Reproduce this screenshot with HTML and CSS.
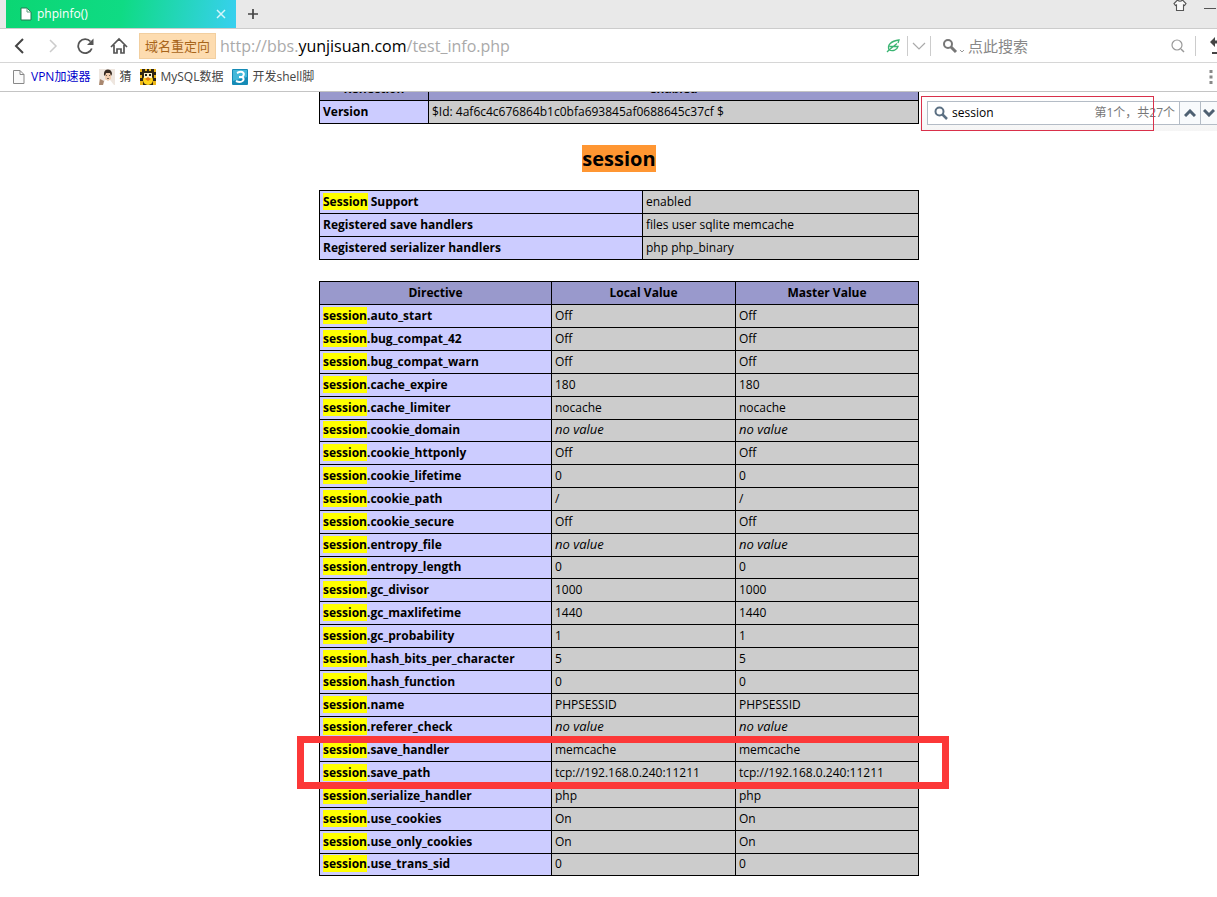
FILE: index.html
```html
<!DOCTYPE html>
<html lang="zh-CN">
<head>
<meta charset="utf-8">
<title>phpinfo()</title>
<link rel="stylesheet" href="styles.css">
</head>
<body>
<header class="browser">
  <div class="tabbar">
    <div class="tab">
      <svg class="tab-icon" width="12" height="14" viewBox="0 0 12 14"><path d="M1 1h6l4 4v8H1z" fill="#fff" stroke="#237a51"/><path d="M7 1v4h4" fill="none" stroke="#5d9c7c"/></svg>
      <span class="tab-title">phpinfo()</span>
      <button class="icon-btn" aria-label="关闭"><svg width="10" height="10" viewBox="0 0 10 10"><path d="M1 1l8 8M9 1l-8 8" stroke="#d5f6fa" stroke-width="1.5"/></svg></button>
    </div>
    <button class="icon-btn" aria-label="新标签"><svg width="12" height="12" viewBox="0 0 12 12"><path d="M6 1v10M1 6h10" stroke="#444" stroke-width="1.7"/></svg></button>
    <div class="window-tools">
      <button class="icon-btn" aria-label="皮肤"><svg width="14" height="13" viewBox="0 0 14 13"><path d="M4.500 0Q7 2.200 9.500 0L13 3.500 11.500 5.500 10.500 5V10.500H3.500V5L2.500 5.500 1 3.500z" fill="#f8f8f8" stroke="#555" stroke-width="1.100"/></svg></button>
      <button class="icon-btn" aria-label="最小化"><svg width="14" height="13" viewBox="0 0 14 13"><path d="M1 8.500h12" stroke="#555"/></svg></button>
    </div>
  </div>
  <div class="navbar">
    <div class="nav-buttons">
      <button class="icon-btn" aria-label="后退"><svg width="18" height="18" viewBox="0 0 18 18"><path d="M12 2L5 9l7 7" fill="none" stroke="#444" stroke-width="2"/></svg></button>
      <button class="icon-btn" aria-label="前进"><svg width="18" height="18" viewBox="0 0 18 18"><path d="M6 3l6 6-6 6" fill="none" stroke="#ccc" stroke-width="1.500"/></svg></button>
      <button class="icon-btn" aria-label="刷新"><svg width="18" height="18" viewBox="0 0 18 18"><path d="M14.800 11.500A7 7 0 1 1 13.500 4.500" fill="none" stroke="#555" stroke-width="1.800"/><path d="M16.500 1.500V8H10z" fill="#555"/></svg></button>
      <button class="icon-btn" aria-label="主页"><svg width="18" height="18" viewBox="0 0 18 18"><path d="M1 10L9 2l8 8M4 8v8h3v-4h4v4h3V8" fill="none" stroke="#555" stroke-width="1.700"/></svg></button>
    </div>
    <span class="redirect">域名重定向</span>
    <div class="url">http://bbs.<b>yunjisuan.com</b>/test_info.php</div>
    <button class="icon-btn" aria-label="极速模式"><svg width="14" height="14" viewBox="0 0 14 14"><path d="M1 13L3 11C1 6 5 2 13 1L12 4M3 11L11 4.500M3.500 7.500H12C11 11 7 12.500 3 11" fill="none" stroke="#3bb573" stroke-width="1.300"/></svg></button>
    <button class="icon-btn split" aria-label="展开地址"><svg width="14" height="8" viewBox="0 0 14 8"><path d="M1 1l6 6 6-6" fill="none" stroke="#aaa" stroke-width="1.200"/></svg></button>
    <label class="search">
      <svg width="24" height="16" viewBox="0 0 24 16"><circle cx="6" cy="6" r="4" fill="none" stroke="#777" stroke-width="2"/><path d="M9 9l5 5" stroke="#777" stroke-width="3"/><path d="M18 12l2 2 2-2" fill="none" stroke="#999"/></svg>
      <input type="text" placeholder="点此搜索" aria-label="搜索">
      <svg width="14" height="14" viewBox="0 0 14 14"><circle cx="6" cy="6" r="5" fill="none" stroke="#999" stroke-width="1.200"/><path d="M10 10l3 3" stroke="#999" stroke-width="1.500"/></svg>
    </label>
    <button class="icon-btn undo" aria-label="撤销"><svg width="7" height="18" viewBox="0 0 7 18"><path d="M0 5l5-5v3.500h2v3H5V10zM2 15h5v2H2z" fill="#444"/></svg></button>
  </div>
  <nav class="bookmarks">
    <a class="vpn" href="#"><svg width="16" height="16" viewBox="0 0 16 16"><path d="M2.500 1.500h6.500l4 4v9H2.500zM9 1.500v4h4" fill="#fafafa" stroke="#888"/></svg>VPN加速器</a>
    <a href="#"><svg width="16" height="16" viewBox="0 0 16 16"><path fill="#eee6df" d="M0 0h16v16H0z"/><path fill="#fff" d="M4 16l2-5h5l4 5z"/><path fill="#f1ccae" d="M6 3h6v7l-3 2-3-2z"/><path fill="#352820" d="M5 6c-1-7 8-7 8-1l-1 2-1-3H7L6 7z"/><path fill="#a98870" d="M1 10l4 2-1 4H0z"/><path fill="#765" d="M7 6h1v1H7zM10 6h1v1h-1zM8 9h2v1H8z"/></svg>猜</a>
    <a href="#"><svg width="16" height="16" viewBox="0 0 16 16"><path fill="#302512" d="M0 0h16v16H0z"/><path fill="#edb719" d="M0 0h2v3H0zM14 0h2v3h-2zM0 6h2v3H0zM14 6h2v3h-2zM0 12h3v4H0zM13 12h3v4h-3zM5 0h2v2H5zM9 0h2v2H9z"/><ellipse cx="8" cy="11" rx="5" ry="5" fill="#ffd51d"/><path d="M4 4h8v5H4z" fill="#fff3c8"/><path d="M5 5h2v2H5zM9 5h2v2H9z" fill="#222"/><path d="M5 10l3-2 3 2-3 2z" fill="#e67a15"/></svg>MySQL数据</a>
    <a href="#"><svg width="16" height="16" viewBox="0 0 16 16"><rect width="16" height="16" rx="1" fill="#158bb6"/><path d="M1 1h14v7L1 12z" fill="#42b8d9"/><path d="M5 4c6-3 9 1 5 4 4 2 0 7-6 4M7 8h3" fill="none" stroke="#fff" stroke-width="2"/></svg>开发shell脚</a>
    <button class="icon-btn more" aria-label="更多"><svg width="4" height="16" viewBox="0 0 4 16"><path d="M.5 1h3v3h-3zM.5 6.500h3v3h-3zM.5 12h3v3h-3z" fill="#888"/></svg></button>
  </nav>
</header>

<main class="page">
  <form class="findbar">
    <div class="find-box">
      <svg width="14" height="14" viewBox="0 0 14 14"><circle cx="5.500" cy="5.500" r="4" fill="none" stroke="#5c7083" stroke-width="2"/><path d="M8.500 8.500L13 13" stroke="#5c7083" stroke-width="2.500"/></svg>
      <input type="text" value="session" aria-label="查找">
      <output>第1个，共27个</output>
    </div>
    <button type="button" aria-label="上一个"><svg width="12" height="8" viewBox="0 0 12 8"><path d="M1 7l5-5 5 5" fill="none" stroke="#4e6072" stroke-width="3"/></svg></button>
    <button type="button" aria-label="下一个"><svg width="12" height="8" viewBox="0 0 12 8"><path d="M1 1l5 5 5-5" fill="none" stroke="#4e6072" stroke-width="3"/></svg></button>
    <div class="find-frame"></div>
  </form>

  <table class="info reflection">
    <tr><th>Reflection</th><th>enabled</th></tr>
    <tr><td class="e">Version</td><td>$Id: 4af6c4c676864b1c0bfa693845af0688645c37cf $</td></tr>
  </table>

  <h2><mark>session</mark></h2>

  <table class="info support">
    <tr><td class="e"><mark>Session</mark> Support</td><td>enabled</td></tr>
    <tr><td class="e">Registered save handlers</td><td>files user sqlite memcache</td></tr>
    <tr><td class="e">Registered serializer handlers</td><td>php php_binary</td></tr>
  </table>

  <div class="directives-wrap">
    <table class="info directives">
      <thead><tr><th>Directive</th><th>Local Value</th><th>Master Value</th></tr></thead>
      <tbody>
      <tr><td class="e"><mark>session</mark>.auto_start</td><td>Off</td><td>Off</td></tr>
      <tr><td class="e"><mark>session</mark>.bug_compat_42</td><td>Off</td><td>Off</td></tr>
      <tr><td class="e"><mark>session</mark>.bug_compat_warn</td><td>Off</td><td>Off</td></tr>
      <tr><td class="e"><mark>session</mark>.cache_expire</td><td>180</td><td>180</td></tr>
      <tr><td class="e"><mark>session</mark>.cache_limiter</td><td>nocache</td><td>nocache</td></tr>
      <tr><td class="e"><mark>session</mark>.cookie_domain</td><td><i>no value</i></td><td><i>no value</i></td></tr>
      <tr><td class="e"><mark>session</mark>.cookie_httponly</td><td>Off</td><td>Off</td></tr>
      <tr><td class="e"><mark>session</mark>.cookie_lifetime</td><td>0</td><td>0</td></tr>
      <tr><td class="e"><mark>session</mark>.cookie_path</td><td>/</td><td>/</td></tr>
      <tr><td class="e"><mark>session</mark>.cookie_secure</td><td>Off</td><td>Off</td></tr>
      <tr><td class="e"><mark>session</mark>.entropy_file</td><td><i>no value</i></td><td><i>no value</i></td></tr>
      <tr><td class="e"><mark>session</mark>.entropy_length</td><td>0</td><td>0</td></tr>
      <tr><td class="e"><mark>session</mark>.gc_divisor</td><td>1000</td><td>1000</td></tr>
      <tr><td class="e"><mark>session</mark>.gc_maxlifetime</td><td>1440</td><td>1440</td></tr>
      <tr><td class="e"><mark>session</mark>.gc_probability</td><td>1</td><td>1</td></tr>
      <tr><td class="e"><mark>session</mark>.hash_bits_per_character</td><td>5</td><td>5</td></tr>
      <tr><td class="e"><mark>session</mark>.hash_function</td><td>0</td><td>0</td></tr>
      <tr><td class="e"><mark>session</mark>.name</td><td>PHPSESSID</td><td>PHPSESSID</td></tr>
      <tr><td class="e"><mark>session</mark>.referer_check</td><td><i>no value</i></td><td><i>no value</i></td></tr>
      <tr><td class="e"><mark>session</mark>.save_handler</td><td>memcache</td><td>memcache</td></tr>
      <tr><td class="e"><mark>session</mark>.save_path</td><td>tcp://192.168.0.240:11211</td><td>tcp://192.168.0.240:11211</td></tr>
      <tr><td class="e"><mark>session</mark>.serialize_handler</td><td>php</td><td>php</td></tr>
      <tr><td class="e"><mark>session</mark>.use_cookies</td><td>On</td><td>On</td></tr>
      <tr><td class="e"><mark>session</mark>.use_only_cookies</td><td>On</td><td>On</td></tr>
      <tr><td class="e"><mark>session</mark>.use_trans_sid</td><td>0</td><td>0</td></tr>
      </tbody>
    </table>
    <div class="callout"></div>
  </div>
</main>
</body>
</html>
```

FILE: styles.css
```css
* { box-sizing: border-box; }
body {
  margin: 0;
  min-height: 100vh;
  background: #fff;
  color: #000;
  font: 12px/18px "Open Sans", "Noto Sans CJK SC", sans-serif;
  overflow: hidden;
}
svg { display: block; flex: none; }
button, input { font: inherit; color: inherit; }
.icon-btn { border: 0; padding: 0; background: none; flex: none; }

.tabbar {
  display: flex;
  align-items: center;
  height: 29px;
  padding-left: 6px;
  background: #e9e9e9;
  border-bottom: 1px solid #ccc;
}
.tab {
  display: flex;
  align-items: center;
  gap: 5px;
  width: 230px;
  height: 28px;
  margin-right: 11px;
  padding: 0 10px 0 14px;
  background: linear-gradient(100deg, #0bd673 0%, #0fdb84 50%, #38d0f0 100%);
  color: #fff;
}
.tab-title { flex: 1; }
.window-tools {
  display: flex;
  align-self: flex-start;
  gap: 16px;
  margin-left: auto;
}

.navbar {
  display: flex;
  align-items: center;
  height: 34px;
  padding-left: 11px;
  border-bottom: 1px solid #d6d6d6;
}
.nav-buttons { display: flex; gap: 15px; }
.redirect {
  margin: 0 4px 0 11px;
  padding: 3px 5px;
  border: 1px solid #f2cfa0;
  background: #fddcb0;
  color: #a8651a;
  font-size: 13px;
}
.url { flex: 1; font-size: 16px; color: #aaa; white-space: nowrap; }
.url b { font-weight: 400; color: #000; }
.split {
  display: flex;
  align-items: center;
  height: 20px;
  margin-left: 7px;
  padding: 0 4px;
  border: 1px solid #ccc;
  border-width: 0 1px;
}
.search {
  display: flex;
  align-items: center;
  width: 265px;
  height: 20px;
  padding: 0 10px 0 11px;
  border-right: 1px solid #ccc;
}
.search input {
  flex: 1;
  min-width: 0;
  padding: 0 2px;
  border: 0;
  outline: 0;
  background: none;
  font-size: 15px;
}
.search input::placeholder { color: #888; }
.undo { margin-left: 14px; }

.bookmarks {
  display: flex;
  align-items: center;
  gap: 9px;
  height: 29px;
  padding: 0 4px 0 11px;
  border-bottom: 1px solid #c4c4c4;
}
.bookmarks a {
  display: flex;
  align-items: center;
  gap: 4px;
  color: #444;
  text-decoration: none;
}
.bookmarks .vpn { color: #00c; }
.more { margin-left: auto; }

.page {
  position: relative;
  padding-left: 21px;
  overflow: hidden;
}
.info {
  width: 600px;
  margin: 0 auto 21px;
  border-collapse: collapse;
  table-layout: fixed;
}
.info td, .info th {
  height: 23px;
  padding: 2px 3px;
  border: 1px solid #000;
  background: #ccc;
  text-align: left;
}
.info th { background: #9999cc; text-align: center; }
.info .e { background: #ccccff; font-weight: 700; }
.info i { font-size: 13px; line-height: 16px; }
mark { background: #ff0; color: inherit; }
h2 {
  margin: 0 0 17px;
  font-size: 20px;
  line-height: 28px;
  text-align: center;
}
h2 mark { background: #ff9632; }
.reflection { margin-top: -15px; }
.reflection th:first-child { width: 109px; }
.support td:first-child { width: 323px; }
.directives { margin-bottom: 0; }
.directives th:first-child { width: 232px; }
.directives th:nth-child(2) { width: 184px; }
.directives tr:nth-child(13n + 6) td,
.directives tr:nth-child(13n + 12) td {
  height: 22px;
  padding-top: 1px;
}
.directives-wrap { position: relative; width: 600px; margin: 0 auto; }
.callout {
  position: absolute;
  top: 455px;
  left: -22px;
  right: -30px;
  height: 53px;
  border: 7px solid #fc3838;
}

.findbar {
  position: absolute;
  top: 3px;
  right: 0;
  display: flex;
  align-items: center;
  width: 297px;
  height: 36px;
  padding-left: 7px;
  background: linear-gradient(#fff, #f5f5f5);
  overflow: hidden;
}
.find-box {
  display: flex;
  flex: 1;
  align-items: center;
  gap: 4px;
  min-width: 0;
  height: 24px;
  padding: 0 4px 0 6px;
  border: 1px solid #b4bcc6;
  background: #fff;
}
.find-box input {
  flex: 1;
  min-width: 0;
  padding: 0;
  border: 0;
  outline: 0;
  background: none;
}
.find-box output { color: #777; white-space: nowrap; }
.findbar button {
  display: flex;
  flex: none;
  align-items: center;
  justify-content: center;
  width: 21px;
  height: 24px;
  padding: 0;
  border: 1px solid #b4bcc6;
  border-left: 0;
  background: #f8fafc;
}
.findbar button:last-of-type { width: 16px; border-right: 0; }
.find-frame {
  position: absolute;
  top: 1px;
  left: 1px;
  width: 233px;
  height: 35px;
  border: 1px solid #d9304a;
}
```
